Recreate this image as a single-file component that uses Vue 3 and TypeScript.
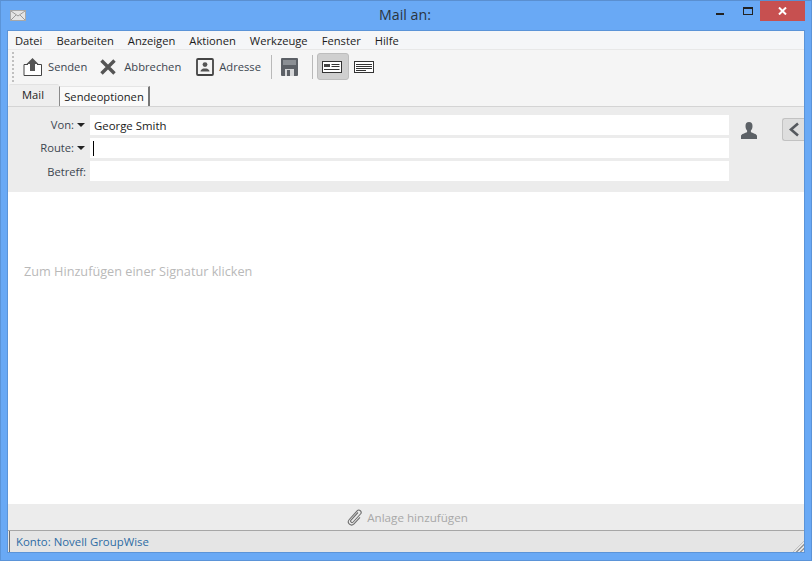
<script setup lang="ts">
const menus: string[] = ['Datei', 'Bearbeiten', 'Anzeigen', 'Aktionen', 'Werkzeuge', 'Fenster', 'Hilfe']
</script>

<template>
  <div class="window">
    <header class="titlebar">
      <svg class="mail-icon" width="16" height="12" viewBox="0 0 16 12">
        <rect x="0.5" y="0.5" width="15" height="10" fill="#e4e4e4" stroke="#a8a8a8" />
        <path d="M1 1l7 5 7-5M1 10l5-5M15 10l-5-5" fill="none" stroke="#9a9a9a" />
      </svg>
      <div class="title">Mail an:</div>
      <div class="controls">
        <div class="ctl ctl-min"><span class="min-bar"></span></div>
        <div class="ctl ctl-max"><span class="max-box"></span></div>
        <div class="ctl ctl-close">
          <svg width="9" height="8" viewBox="0 0 9 8"><path d="M1 0.5l7 7M8 0.5l-7 7" stroke="#fff" stroke-width="2" /></svg>
        </div>
      </div>
    </header>

    <div class="client">
      <nav class="menubar">
        <span v-for="m in menus" :key="m" class="menu">{{ m }}</span>
      </nav>

      <div class="toolbar">
        <div class="grip"></div>
        <div class="tool">
          <svg width="20" height="20" viewBox="0 0 20 20">
            <path d="M1 7.500h4M14 7.500h4.500v11H1v-11" fill="#fff" stroke="#444" />
            <path d="M9.500 1l6 6H12v7H7V7H3.500z" fill="#555" />
          </svg>
          <span>Senden</span>
        </div>
        <div class="tool tool-x">
          <svg width="16" height="16" viewBox="0 0 16 16">
            <path d="M1.500 1.500l13 13M14.500 1.500l-13 13" stroke="#555" stroke-width="3.400" />
          </svg>
          <span>Abbrechen</span>
        </div>
        <div class="tool">
          <svg width="18" height="18" viewBox="0 0 18 18">
            <rect x="1" y="1" width="16" height="16" rx="1" fill="#f4f4f4" stroke="#444" stroke-width="1.800" />
            <circle cx="9" cy="6.600" r="2.400" fill="#555" />
            <path d="M4.500 13.500c0-2 2-2.600 3-3h3c1 .4 3 1 3 3z" fill="#555" />
          </svg>
          <span>Adresse</span>
        </div>
        <div class="sep"></div>
        <svg class="save" width="17" height="18" viewBox="0 0 17 18">
          <path d="M1 0h15a1 1 0 0 1 1 1v16a1 1 0 0 1-1 1H1a1 1 0 0 1-1-1V1a1 1 0 0 1 1-1z" fill="#5c6066" />
          <rect x="2" y="2" width="13" height="5" fill="#8b8f94" />
          <rect x="4" y="11" width="9" height="7" fill="#d5d6d8" />
          <rect x="6" y="12" width="3" height="6" fill="#5c6066" />
        </svg>
        <div class="sep sep-b"></div>
        <div class="view-btn active">
          <svg width="20" height="12" viewBox="0 0 20 12">
            <rect x="0.500" y="0.500" width="19" height="11" fill="#fff" stroke="#333" />
            <rect x="2" y="3" width="6" height="3" fill="#444" />
            <path d="M9.500 3.500h8M9.500 5.500h8M2 8.500h15.500" stroke="#333" />
          </svg>
        </div>
        <div class="view-btn plain">
          <svg width="20" height="12" viewBox="0 0 20 12">
            <rect x="0.500" y="0.500" width="19" height="11" fill="#fff" stroke="#333" />
            <path d="M2 3.500h16M2 5.500h16M2 7.500h16M2 9.500h10" stroke="#333" />
          </svg>
        </div>
      </div>

      <div class="tabs">
        <div class="tab tab-active">Mail</div>
        <div class="tab tab-idle">Sendeoptionen</div>
      </div>

      <section class="head">
        <div class="fields">
          <div class="field">
            <div class="label">Von:<i class="caret"></i></div>
            <div class="input">George Smith</div>
          </div>
          <div class="field">
            <div class="label">Route:<i class="caret"></i></div>
            <div class="input"><span class="cursor"></span></div>
          </div>
          <div class="field">
            <div class="label label-plain">Betreff:</div>
            <div class="input"></div>
          </div>
        </div>
        <svg class="person" width="16" height="17" viewBox="0 0 16 17">
          <path d="M8 0c2.400 0 3.500 1.600 3.500 4 0 2-.7 3.500-1.600 4.500v1.500c1.500 1 6.100 2 6.100 4v3H0v-3c0-2 4.600-3 6.100-4V8.500C5.200 7.500 4.500 6 4.500 4 4.500 1.600 5.600 0 8 0z" fill="#5c6166" />
        </svg>
        <div class="collapse">
          <svg width="12" height="15" viewBox="0 0 12 15"><path d="M10 1.500L3 7.500l7 6" fill="none" stroke="#55595e" stroke-width="2.600" /></svg>
        </div>
      </section>

      <main class="body">
        <div class="signature">Zum Hinzufügen einer Signatur klicken</div>
      </main>

      <div class="attach">
        <svg width="16" height="17" viewBox="0 0 16 17">
          <path d="M11 3.500L4 11c-1.300 1.500.9 3.400 2.200 2l7.300-8c2-2.300-1.300-5.300-3.400-3.100L2.300 10.500c-3 3.400 1.700 7.500 4.700 4.300l6-6.500" fill="none" stroke="#6e6e6e" stroke-width="1.100" />
        </svg>
        <span>Anlage hinzufügen</span>
      </div>

      <footer class="status">
        <span class="account">Konto: Novell GroupWise</span>
        <i class="resize"></i>
      </footer>
    </div>
  </div>
</template>

<style>
html, body { margin: 0; padding: 0; overflow: hidden; }
</style>

<style scoped>
.window {
  width: 812px;
  height: 561px;
  box-sizing: border-box;
  display: flex;
  flex-direction: column;
  background: #69a9f5;
  border: 1px solid #5b94d8;
  border-top-color: #5a8fd0;
  font-family: "Open Sans", "Noto Sans", sans-serif;
  font-size: 11.200px;
  color: #2a2a2a;
}
.titlebar {
  height: 30px;
  flex: none;
  display: flex;
  align-items: flex-start;
  position: relative;
}
.mail-icon { margin: 9px 0 0 9px; }
.title {
  position: absolute;
  left: 0;
  right: 0;
  top: 4px;
  padding-right: 2px;
  text-align: center;
  font-size: 14.200px;
  line-height: 20px;
  color: #2b3440;
}
.controls {
  margin-left: auto;
  margin-right: 6px;
  display: flex;
}
.ctl { height: 20px; display: flex; align-items: center; justify-content: center; }
.ctl-min { width: 26px; margin-right: 2px; }
.ctl-max { width: 25px; }
.min-bar { width: 8px; height: 2px; background: #222; margin-top: 6px; }
.max-box { width: 8px; height: 5px; border: 1px solid #222; border-top-width: 2px; }
.ctl-close { width: 45px; background: #c75050; }
.client {
  flex: 1;
  min-height: 0;
  margin: 0 7px 8px 7px;
  display: flex;
  flex-direction: column;
  background: #f5f5f5;
  box-shadow: 0 0 0 1px #5b94d8;
}
.menubar {
  height: 19px;
  box-sizing: border-box;
  flex: none;
  display: flex;
  align-items: center;
  padding-left: 7px;
  gap: 14px;
  background: #f5f6f8;
  border-bottom: 1px solid #e8e8e8;
  color: #1c1c1c;
  font-size: 11.200px;
}
.toolbar {
  height: 33px;
  flex: none;
  display: flex;
  align-items: center;
  padding-left: 4px;
}
.grip {
  width: 0;
  height: 30px;
  border-left: 2px dotted #c0c0c0;
  margin-right: 9px;
}
.tool { display: flex; align-items: center; gap: 5px; margin-right: 13px; color: #3c4650; font-size: 11.200px; }
.tool-x { gap: 8px; margin-right: 15px; }
.sep { width: 1px; height: 24px; background: #b9b9b9; margin-left: -3px; }
.save { margin-left: 9px; }
.sep-b { margin-left: 14px; }
.view-btn { height: 27px; display: flex; align-items: center; justify-content: center; }
.view-btn.active {
  width: 32px;
  margin-left: 4px;
  padding-right: 2px;
  box-sizing: border-box;
  background: #cfcfcf;
  border: 1px solid #bdbdbd;
  border-radius: 3px;
}
.view-btn.plain { width: 20px; margin-left: 5px; }
.tabs {
  height: 24px;
  box-sizing: border-box;
  flex: none;
  display: flex;
  align-items: flex-start;
  padding-left: 1px;
  border-bottom: 1px solid #d4d4d4;
}
.tab { display: flex; align-items: center; justify-content: center; box-sizing: border-box; }
.tab-active {
  width: 50px;
  height: 22px;
  margin-top: 1px;
  background: #eeeeee;
  border-top: 1px solid #e2e2e2;
  border-radius: 2px 2px 0 0;
  padding-bottom: 2px;
  padding-right: 2px;
  color: #222;
}
.tab-idle {
  width: 91px;
  height: 20px;
  margin-top: 3px;
  background: #fafafa;
  border-left: 1px solid #8a8a8a;
  border-right: 2px solid #777;
  border-top: 1px solid #e5e5e5;
  color: #1c1c1c;
}
.head {
  height: 85px;
  flex: none;
  display: flex;
  align-items: flex-start;
  background: #ececec;
}
.fields {
  width: 721px;
  padding-top: 8px;
  display: flex;
  flex-direction: column;
  gap: 3px;
}
.field { display: flex; align-items: stretch; height: 20px; }
.label {
  width: 82px;
  padding-bottom: 2px;
  box-sizing: border-box;
  display: flex;
  align-items: center;
  justify-content: flex-end;
  color: #3c4650;
  font-size: 11.200px;
}
.label-plain { width: 78px; margin-right: 4px; padding-bottom: 0; padding-top: 1px; }
.caret {
  width: 0;
  height: 0;
  margin-top: 2px;
  margin-left: 3px;
  margin-right: 5px;
  border-left: 4px solid transparent;
  border-right: 4px solid transparent;
  border-top: 4px solid #222;
}
.input {
  flex: 1;
  background: #fff;
  padding-left: 4px;
  display: flex;
  align-items: center;
  color: #1a1a1a;
  font-size: 11.400px;
}
.cursor { width: 1px; height: 15px; background: #000; margin-left: -1px; }
.person { margin: 15px 0 0 12px; }
.collapse {
  margin: 11px 0 0 25px;
  width: 22px;
  height: 23px;
  box-sizing: border-box;
  border: 1px solid #c2c2c2;
  border-right: none;
  border-radius: 3px 0 0 3px;
  background: #dedede;
  display: flex;
  align-items: center;
  justify-content: center;
}
.body {
  flex: 1;
  min-height: 0;
  background: #fff;
  padding: 70px 0 0 16px;
}
.signature { color: #b9b9b9; font-size: 12.700px; line-height: 18px; }
.attach {
  height: 27px;
  flex: none;
  box-sizing: border-box;
  background: #ececec;
  border-bottom: 1px solid #a6a6a6;
  padding-left: 3px;
  display: flex;
  align-items: center;
  justify-content: center;
  gap: 4px;
  color: #a8a8a8;
  font-size: 11.650px;
}
.status {
  height: 21px;
  flex: none;
  display: flex;
  align-items: center;
  background: #e5e5e5;
  position: relative;
}
.account {
  height: 100%;
  display: flex;
  align-items: center;
  border-left: 1px solid #6f6f6f;
  margin-left: 1px;
  padding-left: 6px;
  color: #2e6ca4;
  font-size: 11.400px;
}
.resize {
  position: absolute;
  right: 0;
  bottom: 0;
  width: 11px;
  height: 11px;
  background: repeating-linear-gradient(135deg, #e5e5e5 0 1.400px, #9c9c9c 1.400px 2.800px);
  clip-path: polygon(100% 0, 100% 100%, 0 100%);
}
</style>
